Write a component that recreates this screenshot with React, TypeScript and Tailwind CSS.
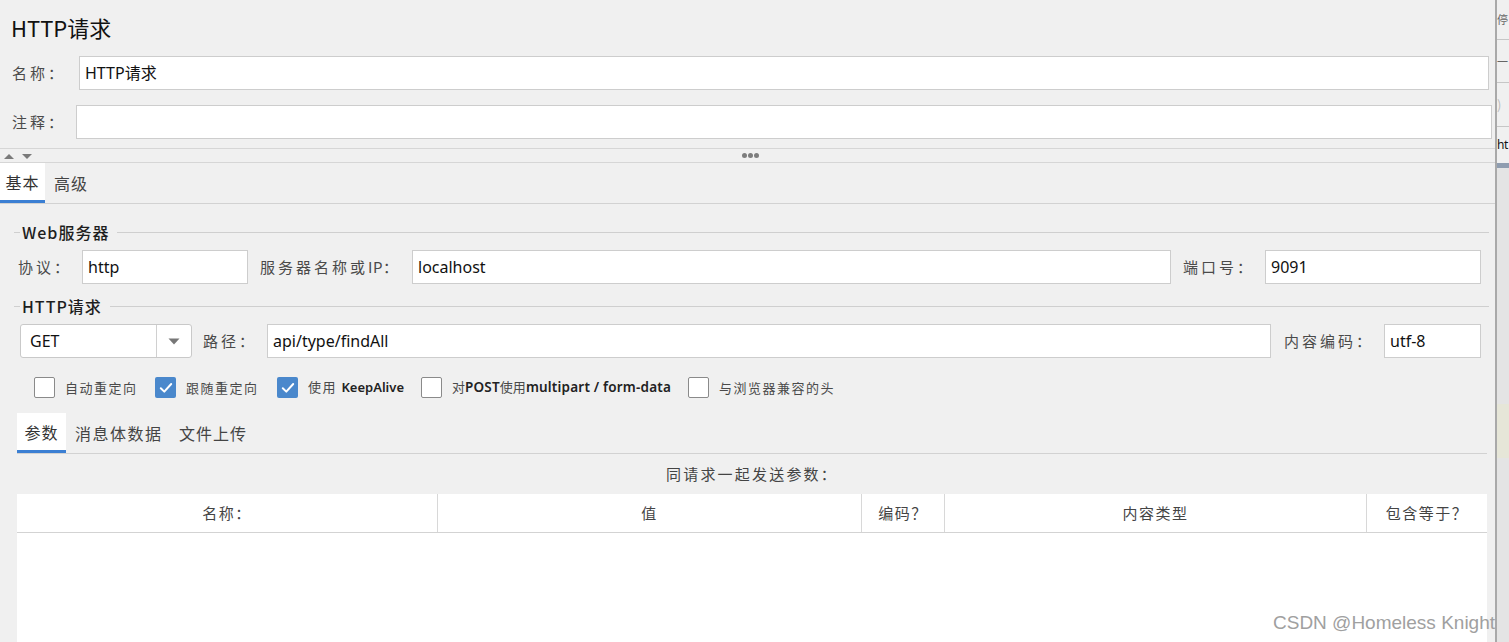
import React from "react";

const cjk = "font-['Noto_Sans_CJK_SC',sans-serif]";
const inputFont = "font-['Noto_Sans','Noto_Sans_CJK_SC',sans-serif]";

function Field({ value, className = "" }: { value?: string; className?: string }) {
  return (
    <div
      className={`h-full bg-white border border-[#cdcdcd] flex items-center px-[5px] text-[16px] text-[#111] ${inputFont} ${className}`}
    >
      {value}
    </div>
  );
}

function Label({ text, latin, className = "" }: { text: string; latin?: string; className?: string }) {
  return (
    <div className={`shrink-0 text-[15px] tracking-[3px] text-[#4a4a4a] whitespace-nowrap ${className}`}>
      {latin ? (
        <>
          {text}
          <span className="tracking-[0.5px]">{latin}</span>：
        </>
      ) : (
        text
      )}
    </div>
  );
}

function GroupHeader({ title, className = "" }: { title: string; className?: string }) {
  return (
    <div className={`flex items-center h-[20px] ${className}`}>
      <div className="ml-[14px] w-[6px] h-px bg-[#cfcfcf]" />
      <div className="px-[2px] text-[16px] tracking-[1px] font-medium text-[#1e1e1e] whitespace-nowrap">{title}</div>
      <div className="ml-[6px] flex-1 h-px bg-[#cfcfcf] mr-[6px]" />
    </div>
  );
}

function Check({ checked }: { checked: boolean }) {
  if (checked) {
    return (
      <div className="w-[21px] h-[21px] rounded-[2px] bg-[#4a88cc] flex items-center justify-center shrink-0">
        <svg width="14" height="12" viewBox="0 0 14 12">
          <path d="M1.8 6.2 L5.3 9.6 L12.2 2" fill="none" stroke="white" strokeWidth="2" strokeLinecap="round" strokeLinejoin="round" />
        </svg>
      </div>
    );
  }
  return <div className="w-[21px] h-[21px] rounded-[2px] bg-white border border-[#8a8a8a] shrink-0" />;
}

function CheckItem({ checked, children, w }: { checked: boolean; children: React.ReactNode; w: string }) {
  return (
    <div className={`flex items-center ${w}`}>
      <Check checked={checked} />
      <div className="ml-[10px] text-[13px] tracking-[1.5px] text-[#4a4a4a] whitespace-nowrap">{children}</div>
    </div>
  );
}

export default function App() {
  return (
    <div className={`w-[1509px] h-[642px] overflow-hidden flex bg-[#f0f0f0] ${cjk}`}>
      {/* main panel */}
      <div className="relative w-[1495px] h-full flex flex-col bg-[#f0f0f0] shrink-0">
        <div className="h-[54px] flex items-center pl-[11px] text-[22px] text-[#111]">HTTP请求</div>

        <div className="mt-[2px] h-[34px] flex items-center pr-[6px]">
          <Label text="名称：" className="w-[79px] pl-[12px] tracking-[2px]" />
          <Field value="HTTP请求" className="flex-1" />
        </div>

        <div className="mt-[15px] h-[34px] flex items-center pr-[3px]">
          <Label text="注释：" className="w-[76px] pl-[12px] tracking-[2px]" />
          <Field className="flex-1" />
        </div>

        {/* splitter */}
        <div className="relative mt-[9px] h-[15px] border-t border-b border-[#d6d6d6] flex items-center">
          <svg width="34" height="10" viewBox="0 0 34 10" className="ml-[3px]">
            <path d="M1 8 L6 3 L11 8 Z" fill="#7a7a7a" />
            <path d="M19 3 L29 3 L24 8 Z" fill="#7a7a7a" />
          </svg>
          <div className="absolute left-[742px] top-[4px] flex gap-[1px]">
            <div className="w-[5px] h-[5px] rounded-full bg-[#7d7d7d]" />
            <div className="w-[5px] h-[5px] rounded-full bg-[#7d7d7d]" />
            <div className="w-[5px] h-[5px] rounded-full bg-[#7d7d7d]" />
          </div>
        </div>

        {/* main tabs */}
        <div className="h-[41px] flex items-stretch border-b border-[#d2d2d2]">
          <div className="w-[45px] bg-white border-b-[3px] border-[#3b7fd3] flex items-center justify-center text-[16px] tracking-[1px] text-[#333]">
            基本
          </div>
          <div className="ml-[9px] flex items-center text-[16px] tracking-[1px] text-[#444]">高级</div>
        </div>

        {/* Web server */}
        <GroupHeader title="Web服务器" className="mt-[18px]" />
        <div className="mt-[8px] h-[34px] flex items-center pl-[18px] pr-[14px]">
          <Label text="协议：" className="w-[64px]" />
          <Field value="http" className="w-[166px]" />
          <Label text="服务器名称或" latin="IP" className="ml-[12px] w-[152px] tracking-[2.5px]" />
          <Field value="localhost" className="flex-1" />
          <Label text="端口号：" className="ml-[12px] w-[82px]" />
          <Field value="9091" className="w-[216px]" />
        </div>

        {/* HTTP request */}
        <GroupHeader title="HTTP请求" className="mt-[12px]" />
        <div className="mt-[8px] h-[34px] flex items-center pl-[20px] pr-[14px]">
          <div className="w-[172px] h-full bg-white border border-[#c9c9c9] rounded-[3px] flex items-stretch shrink-0">
            <div className={`flex-1 flex items-center pl-[9px] text-[16px] text-[#111] ${inputFont}`}>GET</div>
            <div className="w-[35px] border-l border-[#d0d0d0] flex items-center justify-center">
              <svg width="12" height="7" viewBox="0 0 12 7">
                <path d="M0.5 0.5 L11.5 0.5 L6 6.5 Z" fill="#777" />
              </svg>
            </div>
          </div>
          <Label text="路径：" className="ml-[11px] w-[64px]" />
          <Field value="api/type/findAll" className="flex-1" />
          <Label text="内容编码：" className="ml-[13px] w-[100px]" />
          <Field value="utf-8" className="w-[97px]" />
        </div>

        {/* checkboxes */}
        <div className="mt-[19px] h-[21px] flex items-center pl-[34px]">
          <CheckItem checked={false} w="w-[121px]">自动重定向</CheckItem>
          <CheckItem checked={true} w="w-[122px]">跟随重定向</CheckItem>
          <CheckItem checked={true} w="w-[144px]">
            使用 <span className={`font-semibold tracking-[0px] text-[#222] ${inputFont}`}>KeepAlive</span>
          </CheckItem>
          <CheckItem checked={false} w="w-[267px]">
            <span className="tracking-[0px]">对</span>
            <span className={`font-semibold tracking-[0.2px] text-[13.5px] text-[#222] ${inputFont}`}>POST</span>
            <span className="tracking-[0px]">使用</span>
            <span className={`font-semibold tracking-[0.2px] text-[13.5px] text-[#222] ${inputFont}`}>multipart / form-data</span>
          </CheckItem>
          <CheckItem checked={false} w="w-[200px]">与浏览器兼容的头</CheckItem>
        </div>

        {/* sub tabs */}
        <div className="mt-[15px] h-[41px] ml-[17px] mr-[8px] flex items-stretch border-b border-[#d2d2d2]">
          <div className="w-[49px] bg-white border-b-[3px] border-[#3b7fd3] flex items-center justify-center text-[16px] tracking-[1px] text-[#333]">
            参数
          </div>
          <div className="w-[113px] pl-[9px] flex items-center text-[16px] tracking-[1.5px] text-[#444]">消息体数据</div>
          <div className="flex items-center text-[16px] tracking-[1px] text-[#444]">文件上传</div>
        </div>

        <div className="h-[40px] ml-[17px] mr-[8px] flex items-center justify-center text-[15px] tracking-[2.2px] text-[#444]">
          同请求一起发送参数：
        </div>

        {/* table */}
        <div className="ml-[17px] mr-[8px] flex-1 flex flex-col bg-white">
          <div className="h-[39px] grid grid-cols-[420px_424px_83px_422px_1fr] border-b border-[#d3d3d3] text-[15px] tracking-[1.5px] text-[#444]">
            <div className="flex items-center justify-center">名称：</div>
            <div className="flex items-center justify-center border-l border-[#d8d8d8]">值</div>
            <div className="flex items-center justify-center border-l border-[#d8d8d8]">编码？</div>
            <div className="flex items-center justify-center border-l border-[#d8d8d8]">内容类型</div>
            <div className="flex items-center justify-center border-l border-[#d8d8d8]">包含等于？</div>
          </div>
          <div className="flex-1 bg-white" />
        </div>

        <div className="absolute left-[1273px] top-[609px] text-[19px] text-[#a0a0a0] font-['Liberation_Sans',sans-serif] whitespace-nowrap">
          CSDN @Homeless Knight
        </div>
      </div>

      {/* right strip: neighbouring panel */}
      <div className="w-[14px] h-full border-l-[2px] border-[#a9a9a9] flex flex-col overflow-hidden shrink-0">
        <div className="h-[40px] bg-[#f0f0f0] border-b border-[#c6c6c6] flex items-center">
          <span className="text-[11px] leading-none text-[#666]">停</span>
        </div>
        <div className="h-[43px] bg-[#f0f0f0] border-b border-[#c6c6c6] flex items-center">
          <span className="text-[11px] leading-none text-[#666]">一</span>
        </div>
        <div className="h-[44px] bg-[#f0f0f0] border-b border-[#c6c6c6] flex items-center">
          <span className="text-[13px] leading-none text-[#bbb]">)</span>
        </div>
        <div className="h-[36px] bg-[#f0f0f0] flex items-center">
          <span className={`text-[12px] leading-none tracking-[-0.5px] text-[#111] ${inputFont}`}>ht</span>
        </div>
        <div className="h-[5px] bg-[#8f9db0]" />
        <div className="h-[236px] bg-[#e4e4e4]" />
        <div className="h-[54px] bg-[#e6e6d8]" />
        <div className="flex-1 bg-[#e4e4e4]" />
      </div>
    </div>
  );
}
